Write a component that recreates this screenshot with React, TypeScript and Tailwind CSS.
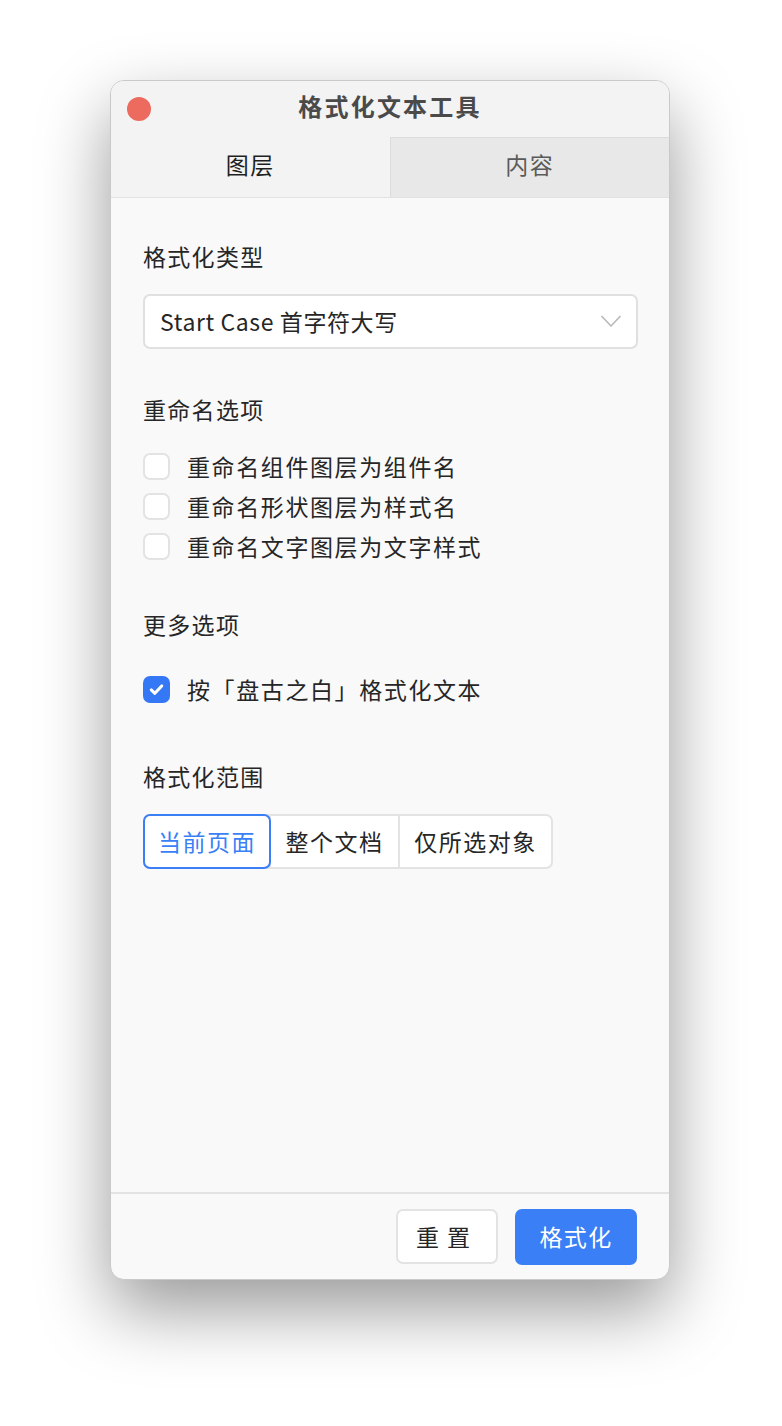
import { useState } from 'react';

const FONT = { fontFamily: '"Noto Sans CJK SC", "Noto Sans", sans-serif' };

function Checkbox({ checked }: { checked: boolean }) {
  if (checked) {
    return (
      <span className="flex h-[27px] w-[27px] shrink-0 items-center justify-center rounded-[7px] bg-[#3478f6]">
        <svg width="19" height="19" viewBox="0 0 16 16" fill="none">
          <path d="M3.6 8.4 L6.6 11.2 L12.4 5" stroke="#fff" strokeWidth="2.6" strokeLinecap="round" strokeLinejoin="round" />
        </svg>
      </span>
    );
  }
  return <span className="h-[27px] w-[27px] shrink-0 rounded-[7px] border-2 border-[#e3e3e3] bg-white" />;
}

function Row({ label, checked = false }: { label: string; checked?: boolean }) {
  return (
    <div className="flex h-[40px] items-center gap-[17px]">
      <Checkbox checked={checked} />
      <span className="text-[23px] tracking-[1.6px] text-[#262626]">{label}</span>
    </div>
  );
}

export default function App() {
  const [tab, setTab] = useState(0);
  const [scope, setScope] = useState(0);
  const scopes = ['当前页面', '整个文档', '仅所选对象'];

  return (
    <div className="flex min-h-[1426px] justify-center bg-white pt-[80px] pr-[2px]" style={FONT}>
      <div className="flex h-[1200px] w-[560px] flex-col overflow-hidden rounded-[14px] border border-[#c9c9c9] bg-[#f9f9f9] shadow-[0_30px_70px_rgba(0,0,0,0.4)]">
        {/* title bar */}
        <div className="relative flex h-[56px] shrink-0 items-center justify-center bg-[#f3f3f3] pb-[6px]">
          <span className="absolute left-[16px] top-[16px] h-[24px] w-[24px] rounded-full bg-[#ec6a5e]" />
          <span className="text-[24px] font-bold tracking-[2.2px] text-[#4a4a4a]">格式化文本工具</span>
        </div>

        {/* tabs */}
        <div className="flex h-[61px] shrink-0 border-b border-[#e2e2e2]">
          {['图层', '内容'].map((t, i) => (
            <button
              key={t}
              onClick={() => setTab(i)}
              className={
                'flex flex-1 items-center justify-center pb-[6px] text-[23px] tracking-[1.5px] ' +
                (tab === i
                  ? 'bg-[#f3f3f3] text-[#1f1f1f]'
                  : 'border-l border-t border-[#dcdcdc] bg-[#e8e8e8] text-[#5a5a5a]')
              }
            >
              {t}
            </button>
          ))}
        </div>

        {/* content */}
        <div className="flex flex-1 flex-col px-[32px] pt-[41px]">
          <div className="text-[23px] tracking-[1.3px] text-[#262626]">格式化类型</div>
          <div className="mt-[20px] flex h-[55px] w-[495px] items-center justify-between rounded-[7px] border-2 border-[#e0e0e0] bg-white pl-[15px] pr-[14px]">
            <span className="text-[23px] tracking-[0.6px] text-[#262626]">Start Case 首字符大写</span>
            <svg width="22" height="14" viewBox="0 0 22 14" fill="none">
              <path d="M1.5 2 L11 12 L20.5 2" stroke="#b8b8b8" strokeWidth="1.6" strokeLinejoin="round" />
            </svg>
          </div>

          <div className="mt-[43px] text-[23px] tracking-[1.3px] text-[#262626]">重命名选项</div>
          <div className="mt-[20px] flex flex-col">
            <Row label="重命名组件图层为组件名" />
            <Row label="重命名形状图层为样式名" />
            <Row label="重命名文字图层为文字样式" />
          </div>

          <div className="mt-[41px] text-[23px] tracking-[1.3px] text-[#262626]">更多选项</div>
          <div className="mt-[28px] flex flex-col">
            <Row label="按「盘古之白」格式化文本" checked />
          </div>

          <div className="mt-[49px] text-[23px] tracking-[1.3px] text-[#262626]">格式化范围</div>
          <div className="mt-[21px] flex h-[55px] w-fit rounded-[7px] border-2 border-[#e3e3e3] bg-white">
            {scopes.map((s, i) => (
              <button
                key={s}
                onClick={() => setScope(i)}
                className={
                  'flex items-center justify-center text-[23px] tracking-[1.5px] ' +
                  (i === 0 ? 'w-[128px] ' : i === 1 ? 'w-[129px] ' : 'w-[153px] ') +
                  (scope === i
                    ? 'relative -m-[2px] h-[55px] rounded-[7px] border-2 border-[#3a7ff6] text-[#3a7ff6]'
                    : 'text-[#262626] ') +
                  (i > 0 && scope !== i ? ' border-l-2 border-[#e3e3e3]' : '')
                }
              >
                {s}
              </button>
            ))}
          </div>
        </div>

        {/* footer */}
        <div className="flex h-[87px] shrink-0 items-center justify-end gap-[17px] border-t-2 border-[#e3e3e3] pr-[32px]">
          <button className="flex h-[55px] w-[102px] items-center justify-center rounded-[7px] border-2 border-[#e3e3e3] bg-white text-[23px] tracking-[8px] text-[#262626]">
            重置
          </button>
          <button className="flex h-[56px] w-[122px] items-center justify-center rounded-[7px] bg-[#3a7ff6] text-[23px] tracking-[1.3px] text-white">
            格式化
          </button>
        </div>
      </div>
    </div>
  );
}
